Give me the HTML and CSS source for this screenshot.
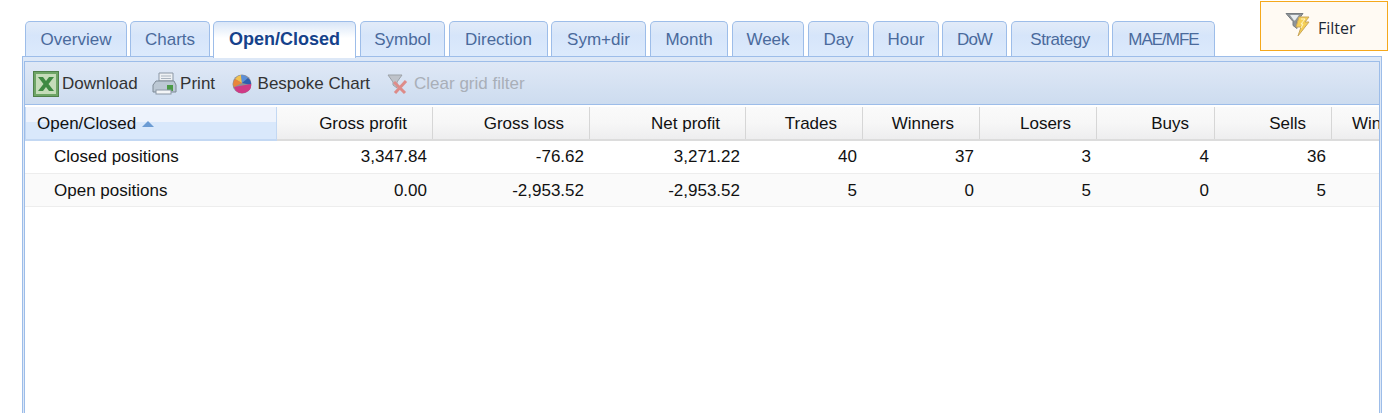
FILE: index.html
```html
<!DOCTYPE html>
<html lang="en">
<head>
    <meta charset="UTF-8">
    <title>Open/Closed</title>
    <link rel="stylesheet" href="styles.css">
</head>
<body>
    <div class="top">
        <div class="tabs">
            <a class="tab t-overview">Overview</a>
            <a class="tab t-charts">Charts</a>
            <a class="tab t-open active">Open/Closed</a>
            <a class="tab t-symbol">Symbol</a>
            <a class="tab t-direction">Direction</a>
            <a class="tab t-symdir">Sym+dir</a>
            <a class="tab t-month">Month</a>
            <a class="tab t-week">Week</a>
            <a class="tab t-day">Day</a>
            <a class="tab t-hour">Hour</a>
            <a class="tab t-dow">DoW</a>
            <a class="tab t-strategy">Strategy</a>
            <a class="tab t-mae">MAE/MFE</a>
        </div>
        <div class="filter">
            <svg class="filter-icon" width="26" height="25" viewBox="0 0 26 25">
                <path d="M1 1.500h17l-6 8v7l-4-3v-4z" fill="#8f9498" stroke="#777c80"/>
                <path d="M5 3h9l-4 5.500h-1z" fill="#e8ecee"/>
                <path d="M14 5h10l-4 5h4L13 24l3-9h-5z" fill="#f5cf55" stroke="#c9a65c"/>
                <path d="M16 7h4l-4 5h2l-2 4" fill="none" stroke="#fff6c9"/>
            </svg>
            <span>Filter</span>
        </div>
    </div>

    <div class="panel">
        <div class="inner">
            <div class="toolbar">
                <div class="tool">
                    <svg width="26" height="26" viewBox="0 0 26 26">
                        <rect x="0.500" y="0.500" width="25" height="25" fill="#6ea566" stroke="#4f8049"/>
                        <rect x="3" y="3" width="20" height="20" fill="#c5dcb9"/>
                        <path d="M5 6h5l3 4 3-4h5l-5.500 7 5.500 7h-5l-3-4-3 4H5l5.500-7z" fill="#3f8a42"/>
                    </svg>
                    <span>Download</span>
                </div>
                <div class="tool t-print">
                    <svg width="25" height="24" viewBox="0 0 25 24">
                        <path d="M7 1h14v8H7z" fill="#eef1f4" stroke="#8b97a5"/>
                        <path d="M9 4h10M9 6.500h10" stroke="#aab4bf"/>
                        <path d="M4 9h18l2 4v7H1v-7z" fill="#bcc8d4" stroke="#7d8995"/>
                        <rect x="15" y="13" width="6" height="6" fill="#4b9a46"/>
                        <rect x="4" y="18" width="15" height="4" fill="#f3f5f7" stroke="#8b97a5"/>
                    </svg>
                    <span>Print</span>
                </div>
                <div class="tool t-bespoke">
                    <svg width="20" height="20" viewBox="0 0 20 20">
                        <circle cx="10" cy="10" r="9.500" fill="#8f8f96"/>
                        <path d="M10 9L3 5a9 8 0 0 1 6-4z" fill="#f2c14e"/>
                        <path d="M10 9L9 1a9 8 0 0 1 7 3z" fill="#5b8fd8"/>
                        <path d="M10 9l6-5a9 8 0 0 1 3 7z" fill="#2f5fae"/>
                        <path d="M2 13l17-3a9 8 0 0 1-15 7z" fill="#cf3a86"/>
                        <path d="M10 9L3 5a9 8 0 0 0-1 8z" fill="#e9853a"/>
                    </svg>
                    <span>Bespoke Chart</span>
                </div>
                <div class="tool t-clear">
                    <svg width="23" height="22" viewBox="0 0 23 22">
                        <path d="M1 2h14l-5 7v6l-4-3V9z" fill="#b9bcc0" stroke="#8f9296"/>
                        <path d="M7 9l11 11M19 8L8 20" stroke="#e0776f" stroke-width="3"/>
                    </svg>
                    <span>Clear grid filter</span>
                </div>
            </div>

            <table class="grid">
                <colgroup>
                    <col class="c-name"><col class="c-wide"><col class="c-wide2"><col class="c-wide">
                    <col class="c-num"><col class="c-num"><col class="c-num"><col class="c-num2"><col class="c-num"><col>
                </colgroup>
                <thead>
                    <tr>
                        <th class="sorted">Open/Closed<i class="sort-arrow"></i></th>
                        <th>Gross profit</th>
                        <th>Gross loss</th>
                        <th>Net profit</th>
                        <th>Trades</th>
                        <th>Winners</th>
                        <th>Losers</th>
                        <th>Buys</th>
                        <th>Sells</th>
                        <th class="clipped">Winners</th>
                    </tr>
                </thead>
                <tbody>
                    <tr>
                        <td class="name">Closed positions</td>
                        <td>3,347.84</td><td>-76.62</td><td>3,271.22</td>
                        <td>40</td><td>37</td><td>3</td><td>4</td><td>36</td><td></td>
                    </tr>
                    <tr class="alt">
                        <td class="name">Open positions</td>
                        <td>0.00</td><td>-2,953.52</td><td>-2,953.52</td>
                        <td>5</td><td>0</td><td>5</td><td>0</td><td>5</td><td></td>
                    </tr>
                </tbody>
            </table>
        </div>
    </div>
</body>
</html>
```

FILE: styles.css
```css
html, body {
    height: 100%;
}
body {
    margin: 0;
    display: flex;
    flex-direction: column;
    overflow: hidden;
    background: #fff;
    font-family: "Liberation Sans", Arial, sans-serif;
    font-size: 17px;
    color: #111;
}

/* tab strip + filter button */
.top {
    display: flex;
    align-items: flex-start;
    height: 56px;
    padding-left: 25px;
    padding-right: 4px;
}
.tabs {
    display: flex;
    margin-top: 21px;
    position: relative;
    z-index: 1;
}
.tab {
    box-sizing: border-box;
    height: 35px;
    margin-right: 3px;
    line-height: 35px;
    text-align: center;
    color: #4a6a9c;
    background: linear-gradient(#e2ebf8, #d6e5fa 40%, #dceafc);
    border: 1px solid #9dbde9;
    border-bottom: none;
    border-radius: 5px 5px 0 0;
}
.tab.active {
    height: 37px;
    color: #15428b;
    font-size: 18px;
    font-weight: bold;
    background: linear-gradient(#d9e6f7, #fff 45%);
}
.t-overview { width: 102px; }
.t-charts { width: 80px; }
.t-open { width: 143px; margin-right: 4px; }
.t-symbol { width: 85px; margin-right: 4px; }
.t-direction { width: 99px; }
.t-symdir { width: 95px; margin-right: 4px; }
.t-month { width: 78px; margin-right: 4px; }
.t-week { width: 72px; margin-right: 4px; }
.t-day { width: 61px; margin-right: 4px; }
.t-hour { width: 66px; }
.t-dow { width: 65px; margin-right: 4px; letter-spacing: -1px; }
.t-strategy { width: 98px; letter-spacing: -0.5px; }
.t-mae { width: 103px; letter-spacing: -1px; }

.filter {
    box-sizing: border-box;
    width: 128px;
    height: 50px;
    margin: 1px 0 0 auto;
    padding: 10px 0 0 24px;
    display: flex;
    gap: 7px;
    background: #fffaf3;
    border: 1px solid #f5a81c;
    font-family: "Open Sans", sans-serif;
    font-size: 16px;
    color: #1c2733;
}
.filter span {
    margin-top: 5px;
}

/* grid panel */
.panel {
    flex: 1;
    margin: 0 10px 0 22px;
    padding: 4px 1px 0;
    border: 1px solid #9dbde9;
    border-bottom: none;
    background: #dde8f7;
    display: flex;
}
.inner {
    flex: 1;
    min-width: 0;
    background: #fff;
    border: 1px solid #9dbde9;
    border-bottom: none;
    overflow: hidden;
}
.toolbar {
    display: flex;
    align-items: center;
    height: 42px;
    padding-left: 8px;
    gap: 14px;
    color: #333;
    background: linear-gradient(#dfe8f6, #cddcef);
    border-bottom: 1px solid #9dbde9;
}
.tool {
    display: flex;
    align-items: center;
    gap: 3px;
    padding-top: 1px;
}
.t-print {
    gap: 3.5px;
}
.t-bespoke {
    margin-left: 2.5px;
    gap: 6px;
}
.t-clear {
    margin-left: 3px;
    gap: 4px;
    color: #a9afb8;
}
.t-clear svg {
    opacity: 0.8;
}

/* table */
.grid {
    width: 100%;
    border-collapse: collapse;
    table-layout: fixed;
}
.c-name { width: 252px; }
.c-wide { width: 156px; }
.c-wide2 { width: 157px; }
.c-num { width: 117px; }
.c-num2 { width: 118px; }
.grid th {
    height: 35px;
    padding: 3px 26px 0 0;
    box-sizing: border-box;
    text-align: right;
    font-weight: normal;
    white-space: nowrap;
    overflow: hidden;
    /* the column rule starts below the white strip on top of the header */
    background:
        linear-gradient(#d6d6d6, #d6d6d6) right bottom / 1px calc(100% - 2px) no-repeat,
        linear-gradient(#fff 2px, #fafafa 2px, #f7f7f7 50%, #eeeeef);
    border-bottom: 2px solid #dcdcdc;
}
.grid th.sorted {
    padding: 3px 0 0 12px;
    text-align: left;
    background:
        linear-gradient(#c3d8f3, #c3d8f3) right bottom / 1px calc(100% - 2px) no-repeat,
        linear-gradient(#c3d8f3, #c3d8f3) left bottom / 1px calc(100% - 2px) no-repeat,
        linear-gradient(#fff 2px, #eef3fc 2px, #eef3fc 50%, #d9e8fb 50%);
    border-bottom: 2px solid #c3d8f3;
}
.grid th.clipped {
    padding: 3px 0 0 20px;
    text-align: left;
    background: linear-gradient(#fff 2px, #fafafa 2px, #f7f7f7 50%, #eeeeef);
}
.sort-arrow {
    display: inline-block;
    margin-left: 6px;
    vertical-align: 2px;
    border-left: 6px solid transparent;
    border-right: 6px solid transparent;
    border-bottom: 6px solid #6b9bd3;
}
.grid td {
    height: 33px;
    padding: 0 6px 0 0;
    box-sizing: border-box;
    text-align: right;
    border-bottom: 1px solid #ededed;
}
.grid td.name {
    padding: 0 0 0 29px;
    text-align: left;
}
.grid tr.alt td {
    padding-top: 2px;
    background: #fafafa;
}
```
